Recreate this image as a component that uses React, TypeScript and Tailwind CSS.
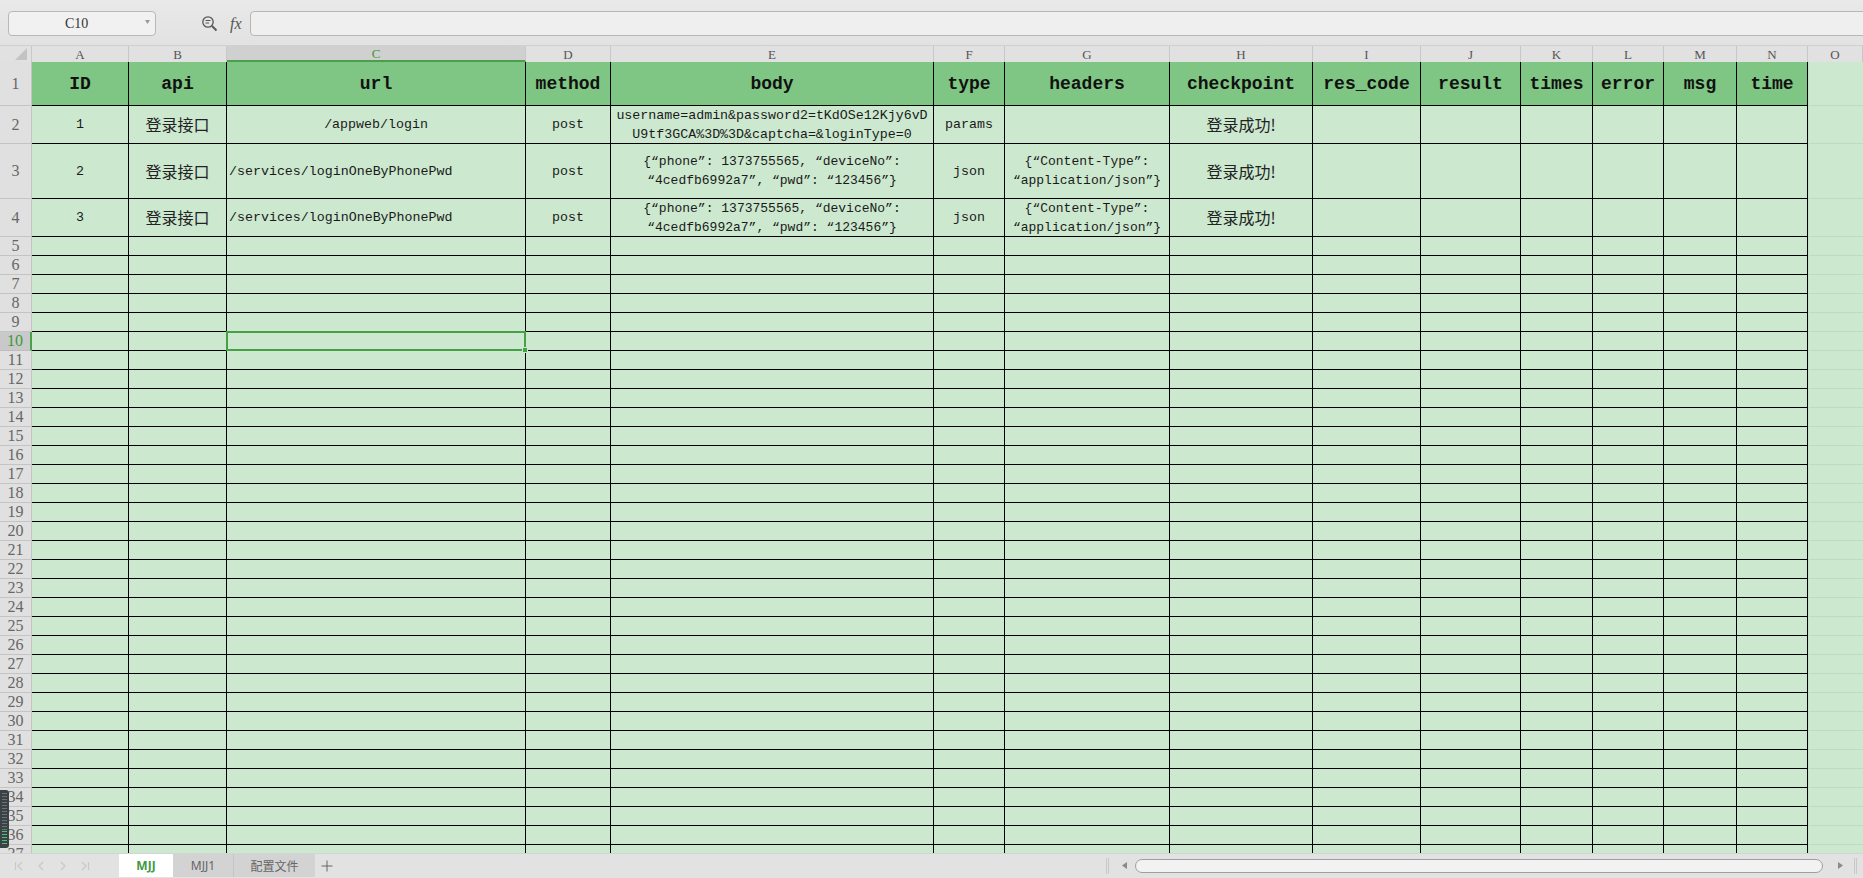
import React from "react";

const COLS = ["A", "B", "C", "D", "E", "F", "G", "H", "I", "J", "K", "L", "M", "N", "O"];
const HEADERS = ["ID", "api", "url", "method", "body", "type", "headers", "checkpoint", "res_code", "result", "times", "error", "msg", "time"];

const mono = "font-['Liberation_Mono','Noto_Sans_CJK_SC',monospace]";
const cjk = "font-['Noto_Sans_CJK_SC',sans-serif]";

function RowHead({ n, active }: { n: number; active?: boolean }) {
  return (
    <div
      className={
        active
          ? "flex items-center justify-center bg-[#c9c9c9] border-b border-[#bdbdbd] border-r-2 border-r-[#4a9f4a] text-[#3c9a3c] font-['Liberation_Serif',serif] text-[16px] leading-none"
          : "flex items-center justify-center bg-[#e0e0e0] border-b border-r border-[#c4c4c4] text-[#666] font-['Liberation_Serif',serif] text-[16px] leading-none"
      }
    >
      {n}
    </div>
  );
}

function Cell({ children, left, className }: { children?: React.ReactNode; left?: boolean; className?: string }) {
  return (
    <div
      className={
        (left ? "justify-start pl-[2px] " : "justify-center text-center ") +
        "flex items-center bg-[#cce8cf] border-r border-b border-black text-[#1a1a1a] overflow-hidden whitespace-nowrap " +
        mono +
        " text-[13.3px] leading-[19px] " +
        (className ?? "")
      }
    >
      {children}
    </div>
  );
}

function OCell() {
  return <div className="bg-[#cce8cf] border-b border-[#bfd9c2] border-l border-l-[#c6dfc9]" />;
}

function TwoLine({ a, b, size }: { a: string; b: string; size?: string }) {
  return (
    <div className={"flex flex-col items-center " + (size ?? "text-[13.3px]")}>
      <div>{a}</div>
      <div>{b}</div>
    </div>
  );
}

function Zh({ children }: { children: React.ReactNode }) {
  return <span className={cjk + " text-[16px] text-[#222]"}>{children}</span>;
}

function Tri({ dir }: { dir: "l" | "r" }) {
  return (
    <svg width="5" height="7" viewBox="0 0 5 7">
      <path d={dir === "l" ? "M5 0 L0 3.5 L5 7 Z" : "M0 0 L5 3.5 L0 7 Z"} fill="#8a8a8a" />
    </svg>
  );
}

export default function App() {
  const emptyRows = Array.from({ length: 33 }, (_, i) => i + 5);
  return (
    <div className="w-[1863px] h-[878px] overflow-hidden flex flex-col bg-[#e4e4e4] relative">
      {/* Toolbar */}
      <div className="h-[46px] flex items-center bg-gradient-to-b from-[#e9e9e9] to-[#e2e2e2] border-b border-[#d0d0d0] shrink-0">
        <div className="ml-[8px] mt-[2px] w-[148px] h-[25px] rounded-[4px] bg-[#f1f1f1] border border-[#b8b8b8] flex items-center relative">
          <span className="absolute left-[56px] font-['Liberation_Serif',serif] text-[14px] text-[#333]">C10</span>
          <span className="absolute right-[5px] top-[8px]">
            <svg width="5" height="4" viewBox="0 0 5 4">
              <path d="M0 0 L5 0 L2.5 4 Z" fill="#999" />
            </svg>
          </span>
        </div>
        <div className="ml-[44px] mt-[2px] w-[18px] h-[18px] flex items-center justify-center">
          <svg width="17" height="17" viewBox="0 0 17 17" fill="none" stroke="#555" strokeWidth="1.3">
            <circle cx="7" cy="7" r="5.2" />
            <path d="M11 11 L15.5 15.5" strokeWidth="1.8" />
            <path d="M4.5 5.5 H9.5 M4.5 8 H8" strokeWidth="1" />
          </svg>
        </div>
        <span className="ml-[12px] mt-[2px] font-['Liberation_Serif',serif] italic text-[16px] text-[#555]">fx</span>
        <div className="ml-[8px] mt-[2px] flex-1 h-[25px] -mr-[10px] rounded-l-[4px] bg-[#efefef] border border-[#b6b6b6]" />
      </div>

      {/* Sheet */}
      <div className="flex-1 overflow-hidden">
        <div className="grid grid-cols-[32px_97px_98px_299px_85px_323px_71px_165px_143px_108px_100px_72px_71px_73px_71px_1fr] grid-rows-[16px_44px_38px_55px_38px_repeat(33,19px)]">
          {/* column letters */}
          <div className="bg-[#e1e1e1] border-r border-[#c8c8c8] flex items-end justify-end pr-[4px] pb-[2px]">
            <svg width="12" height="12" viewBox="0 0 12 12">
              <path d="M12 0 L12 12 L0 12 Z" fill="#c3c3c3" />
            </svg>
          </div>
          {COLS.map((c) =>
            c === "C" ? (
              <div
                key={c}
                className="bg-[#d0d0d0] border-b-2 border-[#4a9f4a] border-r border-r-[#c8c8c8] flex items-center justify-center font-['Liberation_Serif',serif] text-[13px] text-[#3c9a3c] leading-none"
              >
                {c}
              </div>
            ) : (
              <div
                key={c}
                className="bg-[#e1e1e1] border-r border-[#c8c8c8] flex items-center justify-center font-['Liberation_Serif',serif] text-[13px] text-[#555] leading-none"
              >
                {c}
              </div>
            )
          )}

          {/* row 1 */}
          <RowHead n={1} />
          {HEADERS.map((h) => (
            <div
              key={h}
              className={"bg-[#7fc583] border-r border-b border-black flex items-center justify-center pt-[2px] font-bold text-[18px] text-[#111] " + mono}
            >
              {h}
            </div>
          ))}
          <OCell />

          {/* row 2 */}
          <RowHead n={2} />
          <Cell>1</Cell>
          <Cell><Zh>登录接口</Zh></Cell>
          <Cell>/appweb/login</Cell>
          <Cell>post</Cell>
          <Cell>
            <TwoLine a="username=admin&password2=tKdOSe12Kjy6vD" b="U9tf3GCA%3D%3D&captcha=&loginType=0" />
          </Cell>
          <Cell>params</Cell>
          <Cell />
          <Cell><Zh>登录成功!</Zh></Cell>
          <Cell /><Cell /><Cell /><Cell /><Cell /><Cell />
          <OCell />

          {/* row 3 */}
          <RowHead n={3} />
          <Cell>2</Cell>
          <Cell><Zh>登录接口</Zh></Cell>
          <Cell left>/services/loginOneByPhonePwd</Cell>
          <Cell>post</Cell>
          <Cell>
            <TwoLine a={"{“phone”: 1373755565, “deviceNo”:"} b={"“4cedfb6992a7”, “pwd”: “123456”}"} size="text-[13px]" />
          </Cell>
          <Cell>json</Cell>
          <Cell>
            <TwoLine a={"{“Content-Type”:"} b={"“application/json”}"} size="text-[13px]" />
          </Cell>
          <Cell><Zh>登录成功!</Zh></Cell>
          <Cell /><Cell /><Cell /><Cell /><Cell /><Cell />
          <OCell />

          {/* row 4 */}
          <RowHead n={4} />
          <Cell>3</Cell>
          <Cell><Zh>登录接口</Zh></Cell>
          <Cell left>/services/loginOneByPhonePwd</Cell>
          <Cell>post</Cell>
          <Cell>
            <TwoLine a={"{“phone”: 1373755565, “deviceNo”:"} b={"“4cedfb6992a7”, “pwd”: “123456”}"} size="text-[13px]" />
          </Cell>
          <Cell>json</Cell>
          <Cell>
            <TwoLine a={"{“Content-Type”:"} b={"“application/json”}"} size="text-[13px]" />
          </Cell>
          <Cell><Zh>登录成功!</Zh></Cell>
          <Cell /><Cell /><Cell /><Cell /><Cell /><Cell />
          <OCell />

          {/* empty rows */}
          {emptyRows.map((r) => (
            <React.Fragment key={r}>
              <RowHead n={r} active={r === 10} />
              {COLS.slice(0, 14).map((c) =>
                r === 10 && c === "C" ? (
                  <div key={c} className="relative bg-[#cce8cf] border-r border-b border-black">
                    <div className="absolute -left-[1px] -top-[1px] -right-[1px] -bottom-[1px] border-[2.5px] border-[#46a046] z-10" />
                    <div className="absolute -right-[3px] -bottom-[3px] w-[6px] h-[6px] bg-[#46a046] border border-[#cce8cf] z-20" />
                  </div>
                ) : (
                  <div key={c} className="bg-[#cce8cf] border-r border-b border-black" />
                )
              )}
              <OCell />
            </React.Fragment>
          ))}
        </div>
      </div>

      {/* Tab bar */}
      <div className="h-[25px] shrink-0 bg-[#e2e2e2] flex items-center relative border-t border-[#d4d4d4]">
        <div className="flex items-center gap-[12px] ml-[14px]">
          <svg width="10" height="10" viewBox="0 0 10 10" fill="none" stroke="#c8c8c8" strokeWidth="1.2">
            <path d="M1.5 1 V9 M8 1 L4 5 L8 9" />
          </svg>
          <svg width="10" height="10" viewBox="0 0 10 10" fill="none" stroke="#c8c8c8" strokeWidth="1.2">
            <path d="M7 1 L3 5 L7 9" />
          </svg>
          <svg width="10" height="10" viewBox="0 0 10 10" fill="none" stroke="#c8c8c8" strokeWidth="1.2">
            <path d="M3 1 L7 5 L3 9" />
          </svg>
          <svg width="10" height="10" viewBox="0 0 10 10" fill="none" stroke="#c8c8c8" strokeWidth="1.2">
            <path d="M2 1 L6 5 L2 9 M8.5 1 V9" />
          </svg>
        </div>
        <div className="absolute left-[119px] top-0 h-[23px] flex items-stretch">
          <div className="w-[54px] bg-white flex items-center justify-center font-['Noto_Sans',sans-serif] font-bold text-[12px] text-[#3f9a43]">
            MJJ
          </div>
          <div className="w-[61px] bg-[#d3d3d3] border-r border-[#c4c4c4] flex items-center justify-center font-['Noto_Sans',sans-serif] text-[12px] text-[#666]">
            MJJ1
          </div>
          <div className="w-[81px] bg-[#d3d3d3] flex items-center justify-center font-['Noto_Sans_CJK_SC',sans-serif] text-[12px] text-[#666]">
            配置文件
          </div>
          <div className="w-[24px] flex items-center justify-center">
            <svg width="12" height="12" viewBox="0 0 12 12" stroke="#666" strokeWidth="1">
              <path d="M6 0.5 V11.5 M0.5 6 H11.5" />
            </svg>
          </div>
        </div>
        {/* scrollbar */}
        <div className="absolute left-[1106px] top-[4px] w-[3px] h-[16px] border-l border-r border-[#c8c8c8]" />
        <div className="absolute left-[1122px] top-[8px]"><Tri dir="l" /></div>
        <div className="absolute left-[1135px] top-[5px] w-[688px] h-[14px] rounded-full bg-[#f2f2f2] border border-[#9e9e9e]" />
        <div className="absolute left-[1838px] top-[8px]"><Tri dir="r" /></div>
        <div className="absolute left-[1854px] top-[4px] w-[3px] h-[16px] border-l border-r border-[#c8c8c8]" />
      </div>

      {/* left overlay widget */}
      <div className="absolute left-0 top-[790px] w-[9px] h-[58px] rounded-r-[3px] bg-[#3b4246] flex flex-col items-center justify-end gap-[1px] py-[3px]">
        <div className="w-[5px] flex-1 bg-[repeating-linear-gradient(to_bottom,#6b7378_0px,#6b7378_1px,transparent_1px,transparent_3px)]" />
        <div className="w-[5px] h-[14px] bg-[repeating-linear-gradient(to_bottom,#49c27a_0px,#49c27a_1px,transparent_1px,transparent_3px)]" />
      </div>
    </div>
  );
}
